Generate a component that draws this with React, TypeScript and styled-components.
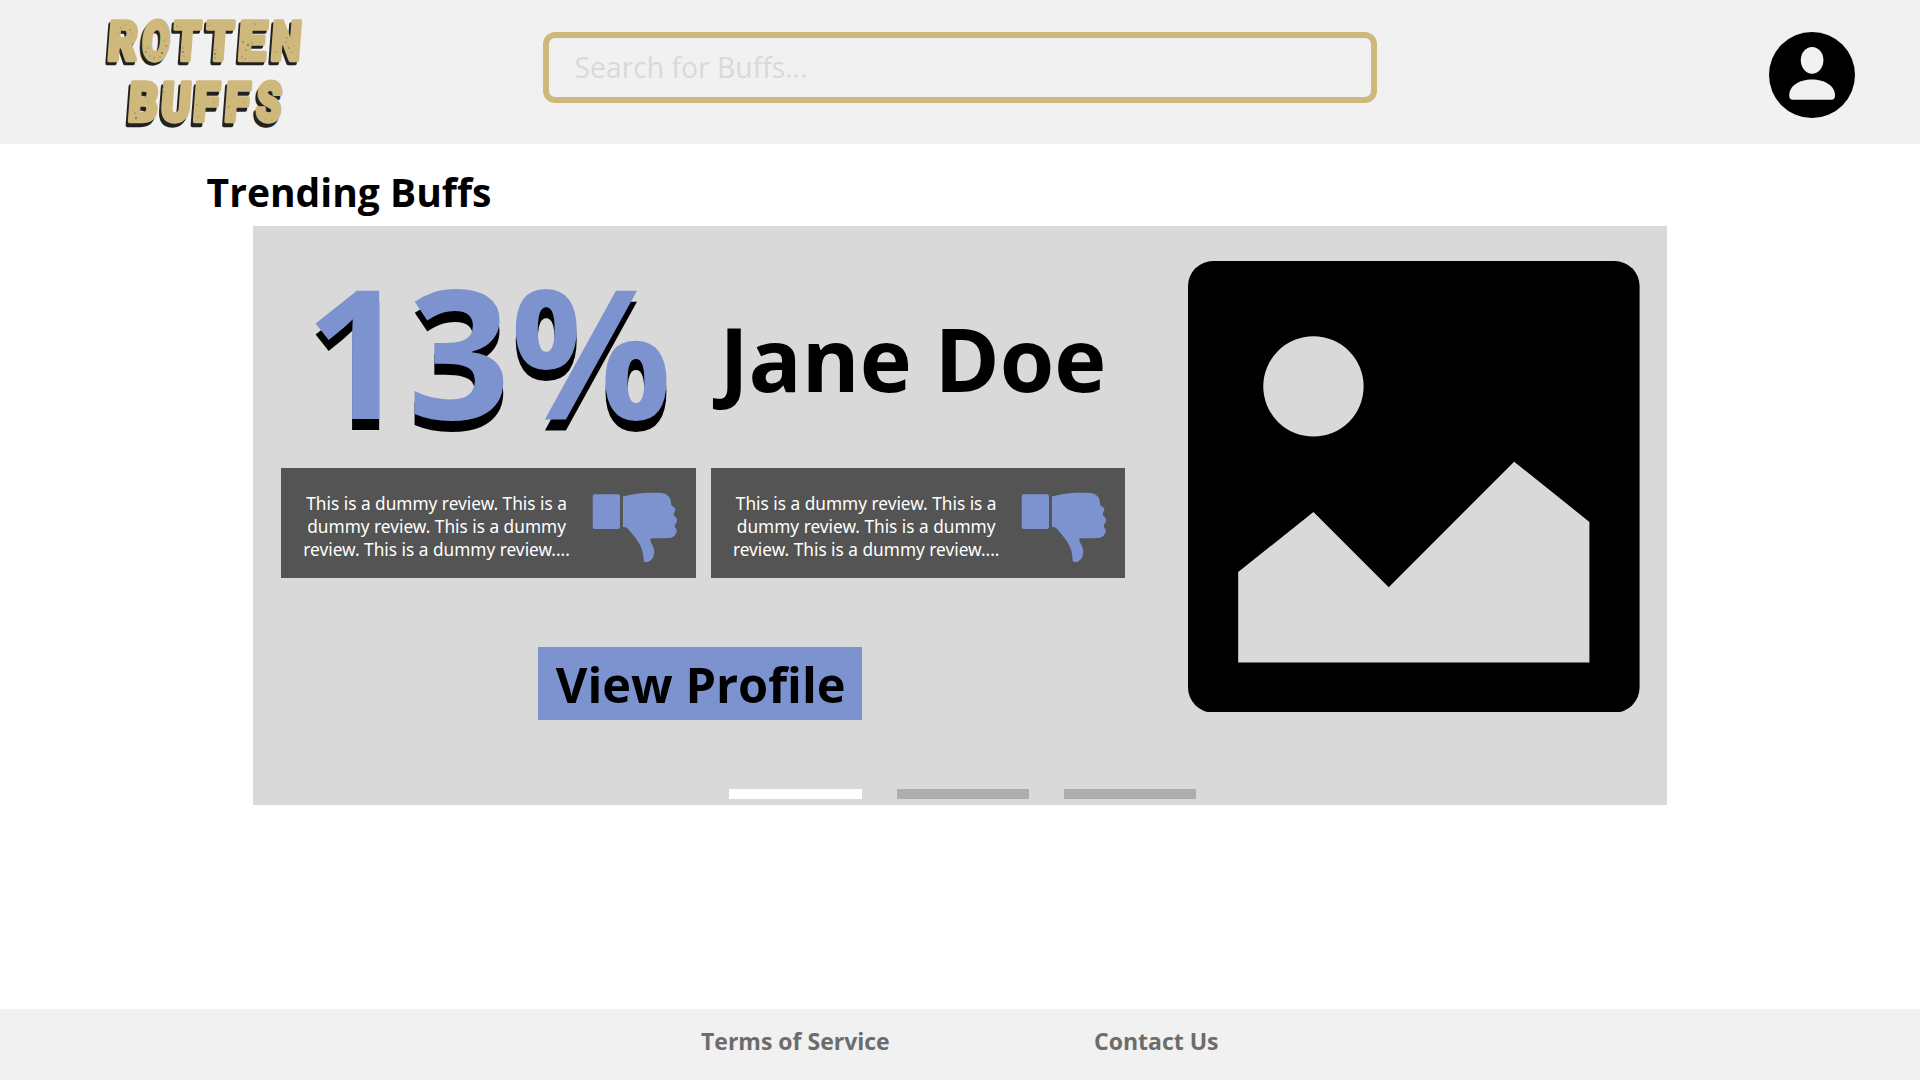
import React from "react";
import styled, { createGlobalStyle } from "styled-components";

const GOLD = "#cfb87c";
const BLUE = "#7d93cf";
const SANS = '"Open Sans", "Noto Sans", sans-serif';

const GlobalStyle = createGlobalStyle`
  *, *::before, *::after { box-sizing: border-box; }
  body { margin: 0; background: #ffffff; }
`;

const Page = styled.div`
  display: flex;
  flex-direction: column;
  width: 1920px;
  height: 1080px;
  overflow: hidden;
  background: #ffffff;
  color: #000000;
  font-family: ${SANS};
  font-variant-ligatures: none;
`;

const Header = styled.header`
  display: flex;
  align-items: flex-start;
  height: 144px;
  flex: none;
  background: #f1f1f1;
`;

const LogoLink = styled.div`
  width: 463px;
  height: 144px;
  margin-left: 80px;
  flex: none;
`;

const SearchBox = styled.div`
  display: flex;
  align-items: center;
  width: 834px;
  height: 71px;
  margin-top: 32px;
  padding-left: 25.6px;
  flex: none;
  border: 6px solid ${GOLD};
  border-radius: 12px;
`;

const Placeholder = styled.span`
  color: #d9d9d9;
  font-size: 28.3px;
  line-height: 59px;
`;

const Avatar = styled.div`
  width: 86px;
  height: 86px;
  margin: 32px 65px 0 auto;
`;

const Main = styled.main`
  flex: 1;
  padding-left: 253px;
`;

const SectionTitle = styled.h1`
  height: 82px;
  margin: 0 0 0 -46.4px;
  padding-top: 21px;
  font-size: 39px;
  font-weight: 700;
  line-height: 54px;
`;

const Carousel = styled.section`
  display: flex;
  flex-direction: column;
  width: 1413.6px;
  height: 579.4px;
  background: #d9d9d9;
`;

const Slide = styled.div`
  display: flex;
  height: 563px;
`;

const Details = styled.div`
  display: flex;
  flex-direction: column;
  width: 935px;
  padding-left: 28px;
`;

const Summary = styled.div`
  display: flex;
  align-items: flex-start;
  height: 242px;
  padding: 24.4px 0 0 24px;
`;

const Score = styled.div`
  width: 414.4px;
  color: ${BLUE};
  font-size: 179.5px;
  font-weight: 700;
  line-height: 200px;
  text-shadow: 0 11px 0 #000000;
`;

const PersonName = styled.h2`
  margin: 47.6px 0 0;
  font-size: 88.1px;
  font-weight: 700;
  line-height: 120px;
  white-space: nowrap;
`;

const Reviews = styled.div`
  display: flex;
  gap: 15px;
`;

const ReviewCard = styled.article`
  display: flex;
  width: 414.6px;
  height: 110px;
  padding: 23.6px 0 0 15.6px;
  background: #545454;
`;

const ReviewText = styled.p`
  width: 280px;
  margin: 0 15px 0 0;
  color: #ffffff;
  font-family: "Noto Sans", "Open Sans", sans-serif;
  font-size: 17.25px;
  line-height: 23px;
  text-align: center;
`;

const Line = styled.span`
  display: block;
  white-space: nowrap;
`;

const ThumbIcon = styled.svg`
  display: block;
  width: 86px;
  height: 71px;
  margin-top: 0.4px;
`;

const ProfileButton = styled.button`
  width: 324px;
  height: 73.4px;
  margin: 68.8px 0 0 257px;
  padding: 1px 0 0 1.4px;
  border: 0;
  background: ${BLUE};
  color: #000000;
  font-family: ${SANS};
  font-size: 48.7px;
  font-weight: 700;
  font-variant-ligatures: none;
  line-height: 73px;
  white-space: nowrap;
`;

const Picture = styled.svg`
  display: block;
  width: 451.6px;
  height: 451.6px;
  margin-top: 34.8px;
`;

const Indicators = styled.div`
  display: flex;
  gap: 35px;
  padding-left: 476px;
`;

const Indicator = styled.span<{ $active?: boolean }>`
  width: ${(p) => (p.$active ? 133 : 132)}px;
  height: 9.6px;
  background: ${(p) => (p.$active ? "#ffffff" : "#adadad")};
`;

const Footer = styled.footer`
  display: flex;
  height: 71px;
  flex: none;
  padding: 16px 0 0 701px;
  background: #f1f1f1;
`;

const FooterLink = styled.a<{ $width?: number }>`
  width: ${(p) => (p.$width ? `${p.$width}px` : "auto")};
  color: #6c6c6c;
  font-size: 23px;
  font-weight: 700;
  line-height: 32px;
`;

type Glyph = { ch: string; left: number; right: number };

/* advance, ink width and left bearing of each capital */
const METRICS: Record<string, [number, number, number]> = {
  R: [37.8, 34, 3],
  O: [40, 38, 1],
  T: [36.6, 35, 1],
  E: [32.5, 29, 3],
  N: [40.7, 35, 3],
  B: [37.4, 33, 3],
  U: [38.5, 33, 2.6],
  F: [31.7, 28, 3],
  S: [36.3, 34, 1],
};

const OUTLINE = 4.4;

const TOP_WORD: Glyph[] = [
  { ch: "R", left: 27, right: 58 },
  { ch: "O", left: 59.5, right: 90 },
  { ch: "T", left: 90.5, right: 120.8 },
  { ch: "T", left: 123, right: 153.7 },
  { ch: "E", left: 157.5, right: 187 },
  { ch: "N", left: 190, right: 220 },
];

const BOTTOM_WORD: Glyph[] = [
  { ch: "B", left: 47.5, right: 78 },
  { ch: "U", left: 79.5, right: 109.5 },
  { ch: "F", left: 112.5, right: 139.5 },
  { ch: "F", left: 143.8, right: 170 },
  { ch: "S", left: 173.5, right: 201.5 },
];

const GRAIN: [number, number, number][] = [
  [41, 28, 0.5], [45, 25, 0.4], [50, 30, 0.6], [38, 33, 0.4], [52, 34, 0.4],
  [66, 52, 0.7], [70, 56, 0.5], [74, 58, 0.6], [82, 53, 0.9], [86, 46, 0.7],
  [84, 41, 0.5], [87, 38, 0.4], [80, 57, 0.5], [68, 48, 0.5], [63, 45, 0.4],
  [97, 26, 0.5], [100, 27, 0.4], [103, 52, 0.8], [104, 56, 0.6], [103, 48, 0.5],
  [128, 26, 0.5], [131, 25, 0.4], [135, 54, 0.8], [136, 50, 0.5], [135, 58, 0.6],
  [163, 42, 0.7], [168, 45, 0.9], [172, 43, 0.5], [166, 50, 0.6], [175, 24, 0.5],
  [162, 57, 0.6], [165, 59, 0.5], [180, 42, 0.4], [206, 42, 0.6], [209, 48, 0.7],
  [212, 52, 0.5], [196, 52, 0.5], [214, 46, 0.4], [207, 38, 0.5], [217, 56, 0.4],
  [56, 118, 0.9], [55, 113, 0.5], [66, 97, 0.6], [68, 101, 0.4], [62, 86, 0.4],
  [83, 87, 0.8], [84, 92, 0.6], [85, 84, 0.4], [117, 105, 0.5], [121, 88, 0.4],
  [134, 102, 0.5], [118, 117, 0.5], [149, 107, 0.5], [164, 102, 0.4], [151, 115, 0.4],
  [182, 92, 0.4], [192, 120, 0.4], [186, 119, 0.5], [198, 112, 0.4], [190, 85, 0.4],
];

function Word({ glyphs, baseline, fill }: { glyphs: Glyph[]; baseline: number; fill: string }) {
  return (
    <g transform={`translate(0 ${baseline}) matrix(1 0 -0.075 1 0 0)`}>
      <text
        fontFamily="Roboto, 'Open Sans', sans-serif"
        fontWeight={900}
        fontSize={54.4}
        fill={fill}
        stroke={fill}
        strokeWidth={OUTLINE}
        strokeLinejoin="round"
      >
        {glyphs.map((g, i) => {
          const [advance, ink, bearing] = METRICS[g.ch];
          const s = (g.right - g.left - OUTLINE) / ink;
          return (
            <tspan
              key={i}
              x={g.left + OUTLINE / 2 - bearing * s}
              y={0}
              textLength={advance * s}
              lengthAdjust="spacingAndGlyphs"
            >
              {g.ch}
            </tspan>
          );
        })}
      </text>
    </g>
  );
}

function Logo() {
  return (
    <svg width="240" height="144" viewBox="0 0 240 144" role="img">
      <g transform="translate(-2.2 3.6)" aria-hidden="true">
        <Word glyphs={TOP_WORD} baseline={59.8} fill="#1f2221" />
        <Word glyphs={BOTTOM_WORD} baseline={120.9} fill="#1f2221" />
      </g>
      <Word glyphs={TOP_WORD} baseline={59.8} fill={GOLD} />
      <Word glyphs={BOTTOM_WORD} baseline={120.9} fill={GOLD} />
      {GRAIN.map(([x, y, r]) => (
        <ellipse key={`${x}-${y}`} cx={x} cy={y} rx={r} ry={r * 1.3} fill="#4a4636" opacity={0.6} />
      ))}
    </svg>
  );
}

function ThumbsDown() {
  return (
    <ThumbIcon viewBox="0 0 86 71" fill={BLUE}>
      <rect x="0.7" y="2.3" width="27.3" height="34.6" rx="2" />
      <path d="M30.9 4.6C40 2.2 49 0.8 58 0.7H67.5C74 0.7 79 4.5 79 10.5C79 12 79.2 13.2 80 13.9C81.8 15 83.5 15.6 83.4 17.6C83.3 19.8 81.6 20.6 81.8 22.6C82 24.6 85 25 85 28.3C85 31.3 82.6 32 82.7 34.2C82.8 36 84.8 36.2 84.7 38.8C84.5 42.6 81.5 45.7 77.6 45.9C71.5 46.2 65 46.3 59.2 46.2C58.2 47.5 58.1 48.6 58.8 50C60.2 53 62.3 55.6 62.3 59.4C62.3 65.5 59 70 54 70C52.4 70 51.7 69.6 51.6 68C51.5 61.5 50 55.8 46.6 50.4C43.4 45.3 39.5 41 35.8 36.8C34.4 35.3 32.9 35 30.9 35Z" />
    </ThumbIcon>
  );
}

const REVIEW_LINES = [
  "This is a dummy review. This is a",
  "dummy review. This is a dummy",
  "review. This is a dummy review....",
];

function Review() {
  return (
    <ReviewCard>
      <ReviewText>
        {REVIEW_LINES.map((line) => (
          <Line key={line}>{line} </Line>
        ))}
      </ReviewText>
      <ThumbsDown />
    </ReviewCard>
  );
}

export default function App() {
  return (
    <Page>
      <GlobalStyle />
      <Header>
        <LogoLink>
          <Logo />
        </LogoLink>
        <SearchBox>
          <Placeholder>Search for Buffs...</Placeholder>
        </SearchBox>
        <Avatar>
          <svg width="86" height="86" viewBox="0 0 86 86">
            <circle cx="43" cy="43" r="43" fill="#000000" />
            <ellipse cx="43.1" cy="28.3" rx="11.3" ry="13.4" fill="#f1f1f1" />
            <path
              d="M20.2 63.5C20.2 54.2 30 47.6 43 47.6S66 54.2 66 63.5C66 66.5 64.8 67.7 62 67.7H24.2C21.4 67.7 20.2 66.5 20.2 63.5Z"
              fill="#f1f1f1"
            />
          </svg>
        </Avatar>
      </Header>
      <Main>
        <SectionTitle>Trending Buffs</SectionTitle>
        <Carousel>
          <Slide>
            <Details>
              <Summary>
                <Score>13%</Score>
                <PersonName>Jane Doe</PersonName>
              </Summary>
              <Reviews>
                <Review />
                <Review />
              </Reviews>
              <ProfileButton>View Profile</ProfileButton>
            </Details>
            <Picture viewBox="0 0 18 18">
              <rect width="18" height="18" rx="1" fill="#000000" />
              <circle cx="5" cy="5" r="2" fill="#d9d9d9" />
              <path d="M2 12.4L5 10L8 13L13 8L16 10.4V16H2Z" fill="#d9d9d9" />
            </Picture>
          </Slide>
          <Indicators>
            <Indicator $active />
            <Indicator />
            <Indicator />
          </Indicators>
        </Carousel>
      </Main>
      <Footer>
        <FooterLink $width={393}>Terms of Service</FooterLink>
        <FooterLink>Contact Us</FooterLink>
      </Footer>
    </Page>
  );
}
